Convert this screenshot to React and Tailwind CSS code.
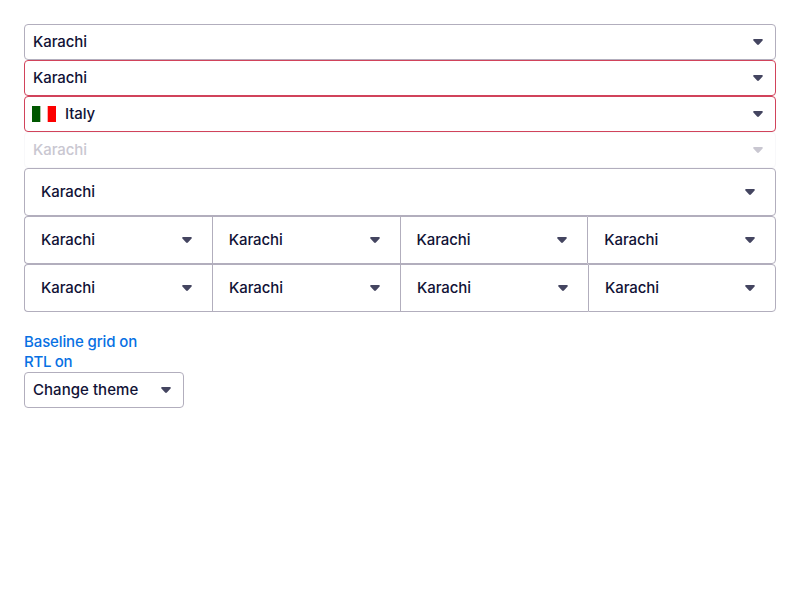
const TEXT = "font-['Inter',sans-serif] font-[450] text-[15px] leading-5";

function Arrow({ className = 'text-[#444560]' }) {
  return (
    <svg className={`h-4 w-4 shrink-0 ${className}`} viewBox="0 0 16 16" fill="currentColor">
      <path d="M4.1 5h7.8c.9 0 1.3 1 .7 1.6L8.9 10.500c-.5.6-1.300.6-1.800 0L3.400 6.600C2.800 6 3.200 5 4.100 5z" />
    </svg>
  );
}

function Flag() {
  return (
    <span className="-ml-px mr-[9px] flex h-4 w-6 shrink-0">
      <span className="w-2 bg-[#005700]" />
      <span className="w-2 border-x border-l-[#a9c9a9] border-r-[#ffb0b0] bg-white" />
      <span className="w-2 bg-[#fc0000]" />
    </span>
  );
}

function Select({ children, icon, className = 'border-[#b2aebd]', arrow, label = 'tracking-[-0.1px]' }) {
  return (
    <div className={`flex h-9 items-center justify-between rounded-[4px] border pr-[9px] pl-2 ${className}`}>
      <span className="flex items-center">
        {icon}
        <span className={label}>{children}</span>
      </span>
      <Arrow className={arrow} />
    </div>
  );
}

function Cell({ className = '' }) {
  return (
    <div className={`flex h-12 items-center justify-between border-y border-l border-[#b2aebd] pr-[17px] pl-4 ${className}`}>
      <span className="tracking-[-0.1px]">Karachi</span>
      <Arrow />
    </div>
  );
}

export default function App() {
  return (
    <div className={`min-h-[600px] bg-white p-6 text-[#111236] ${TEXT}`}>
      <Select>Karachi</Select>
      <Select className="border-[#d1435b]">Karachi</Select>
      <Select className="border-[#d1435b]" icon={<Flag />}>Italy</Select>
      <Select className="border-[#f8f8fa] text-[#c9c7d1]" arrow="text-[#c9c7d1]">Karachi</Select>
      <Cell className="rounded-[4px] border-r" />
      <div className="flex">
        <Cell className="w-[187.75px] rounded-l-[4px]" />
        <Cell className="w-[187.75px]" />
        <Cell className="w-[187.75px]" />
        <Cell className="flex-1 rounded-r-[4px] border-r" />
      </div>
      <div className="grid grid-cols-4">
        <Cell className="rounded-l-[4px]" />
        <Cell />
        <Cell />
        <Cell className="rounded-r-[4px] border-r" />
      </div>
      <div className="mt-5 flex flex-col items-start tracking-[-0.12px] text-[#0770e3]">
        <button type="button">Baseline grid on</button>
        <button type="button" className="tracking-[-0.3px]">RTL on</button>
      </div>
      <div className="w-40">
        <Select label="tracking-[0.04px]">Change theme</Select>
      </div>
    </div>
  );
}
